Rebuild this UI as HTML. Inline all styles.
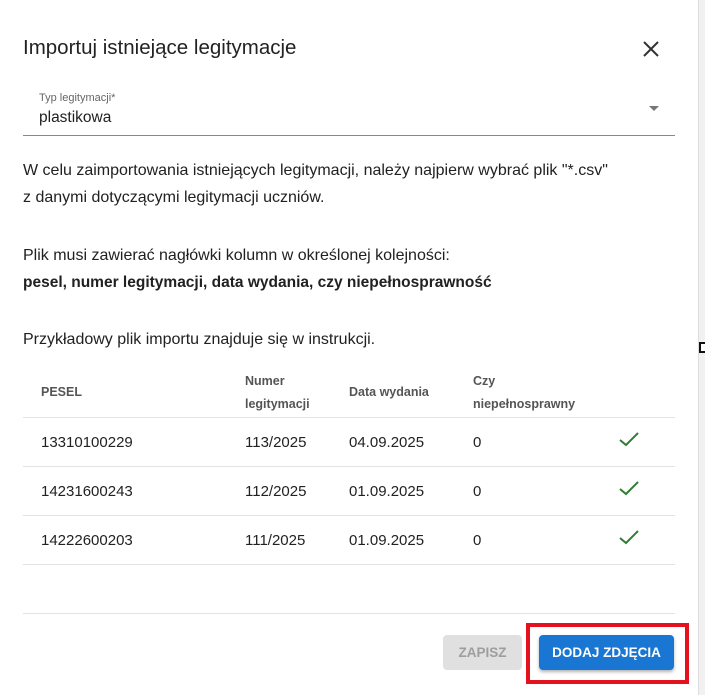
<!DOCTYPE html>
<html><head><style>
body{margin:0;width:705px;height:695px;background:#f1f1f1;font-family:"Liberation Sans",sans-serif;position:relative;overflow:hidden;color:#212121}
.d{position:absolute;left:0;top:0;width:698px;height:695px;background:#fff;border-right:1px solid #ddd}
.a{position:absolute;white-space:nowrap}
.p{font-size:16px;color:#212121}
.th{font-size:12.5px;font-weight:bold;color:#555}
.td{font-size:15px;color:#222}
.hl{position:absolute;left:23px;width:652px;height:1px;background:#e3e3e3}
</style></head><body>
<div class="d">
<div class="a" style="left:23px;top:36px;font-size:20.5px;color:#222">Importuj istniejące legitymacje</div>
<svg class="a" style="left:642px;top:40px" width="18" height="18" viewBox="0 0 18 18"><path d="M2 2L16 16M16 2L2 16" stroke="#333" stroke-width="2"/></svg>
<div class="a" style="left:39px;top:92px;font-size:11px;color:#666">Typ legitymacji*</div>
<div class="a" style="left:39px;top:109px;font-size:15.5px">plastikowa</div>
<svg class="a" style="left:649px;top:106px" width="10" height="6"><path d="M0 0H10L5 5Z" fill="#777"/></svg>
<div class="a" style="left:23px;top:135px;width:652px;height:1px;background:#888"></div>
<div class="a p" style="left:23px;top:162px">W celu zaimportowania istniejących legitymacji, należy najpierw wybrać plik "*.csv"</div>
<div class="a p" style="left:23px;top:189px">z danymi dotyczącymi legitymacji uczniów.</div>
<div class="a p" style="left:23px;top:247px">Plik musi zawierać nagłówki kolumn w określonej kolejności:</div>
<div class="a p" style="left:23px;top:274px;font-weight:bold;font-size:15.5px">pesel, numer legitymacji, data wydania, czy niepełnosprawność</div>
<div class="a p" style="left:23px;top:331px">Przykładowy plik importu znajduje się w instrukcji.</div>
<div class="a th" style="left:41px;top:385px">PESEL</div>
<div class="a th" style="left:245px;top:374px">Numer</div>
<div class="a th" style="left:245px;top:397px">legitymacji</div>
<div class="a th" style="left:349px;top:385px">Data wydania</div>
<div class="a th" style="left:473px;top:374px">Czy</div>
<div class="a th" style="left:473px;top:397px">niepełnosprawny</div>
<div class="hl" style="top:417px"></div>
<div class="hl" style="top:466px"></div>
<div class="hl" style="top:515px"></div>
<div class="hl" style="top:564px"></div>
<div class="hl" style="top:613px"></div>
<div class="a td" style="left:41px;top:434px">13310100229</div><div class="a td" style="left:245px;top:434px">113/2025</div><div class="a td" style="left:349px;top:434px">04.09.2025</div><div class="a td" style="left:473px;top:434px">0</div>
<div class="a td" style="left:41px;top:483px">14231600243</div><div class="a td" style="left:245px;top:483px">112/2025</div><div class="a td" style="left:349px;top:483px">01.09.2025</div><div class="a td" style="left:473px;top:483px">0</div>
<div class="a td" style="left:41px;top:532px">14222600203</div><div class="a td" style="left:245px;top:532px">111/2025</div><div class="a td" style="left:349px;top:532px">01.09.2025</div><div class="a td" style="left:473px;top:532px">0</div>
<svg class="a" style="left:619px;top:432px" width="20" height="15"><path d="M1 8L7 13L19 1" stroke="#2e7d32" stroke-width="2" fill="none"/></svg>
<svg class="a" style="left:619px;top:481px" width="20" height="15"><path d="M1 8L7 13L19 1" stroke="#2e7d32" stroke-width="2" fill="none"/></svg>
<svg class="a" style="left:619px;top:530px" width="20" height="15"><path d="M1 8L7 13L19 1" stroke="#2e7d32" stroke-width="2" fill="none"/></svg>
<div class="a" style="left:443px;top:635px;width:79px;height:35px;background:#e0e0e0;border-radius:4px;color:#9e9e9e;font-size:13.5px;font-weight:bold;line-height:36px;text-align:center">ZAPISZ</div>
<div class="a" style="left:539px;top:635px;width:135px;height:35px;background:#1976d2;border-radius:4px;color:#fff;font-size:13.5px;font-weight:bold;line-height:36px;text-align:center;box-shadow:0 2px 3px rgba(0,0,0,.3)">DODAJ ZDJĘCIA</div>
<div class="a" style="left:526px;top:623px;width:155px;height:53px;border:4px solid #e3121e"></div>
</div>
<div class="a" style="left:699px;top:342px;width:5px;height:7px;border:2px solid #111;background:#fff"></div>
</body></html>
